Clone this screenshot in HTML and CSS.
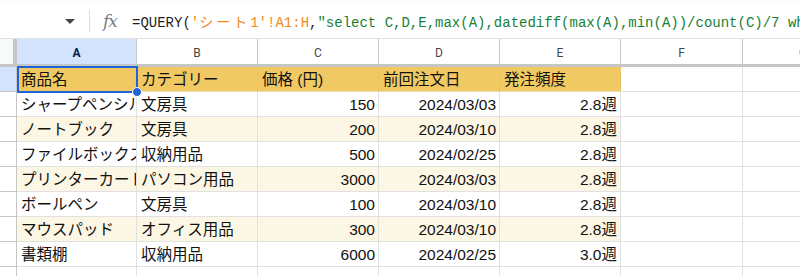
FILE: index.html
```html
<!DOCTYPE html>
<html lang="ja">
<head>
    <meta charset="UTF-8">
    <title>Sheet</title>
    <link rel="stylesheet" href="styles.css">
</head>
<body>

  <div class="formula-bar">
    <div class="name-box"><span class="caret"></span></div>
    <div class="divider"></div>
    <span class="fx">fx</span>
    <div class="formula">=QUERY(<span class="ref">'<span class="wide">シート</span>1'!A1:H</span>,<span class="str">"select C,D,E,max(A),datediff(max(A),min(A))/count(C)/7 where A is not null group by C,D,E"</span>)</div>
  </div>

  <div class="sheet">
    <div class="row heads">
      <div class="corner"></div>
      <div class="col-head active">A</div>
      <div class="col-head">B</div>
      <div class="col-head">C</div>
      <div class="col-head">D</div>
      <div class="col-head">E</div>
      <div class="col-head">F</div>
      <div class="col-head">G</div>
    </div>

    <div class="row title">
      <div class="rh active"></div>
      <div class="cell">商品名</div>
      <div class="cell">カテゴリー</div>
      <div class="cell">価格 (円)</div>
      <div class="cell">前回注文日</div>
      <div class="cell">発注頻度</div>
      <div class="cell blank"></div>
      <div class="cell blank"></div>
    </div>

    <div class="row">
      <div class="rh"></div>
      <div class="cell">シャープペンシル</div>
      <div class="cell">文房具</div>
      <div class="cell num">150</div>
      <div class="cell num">2024/03/03</div>
      <div class="cell num">2.8週</div>
      <div class="cell blank"></div>
      <div class="cell blank"></div>
    </div>

    <div class="row band">
      <div class="rh"></div>
      <div class="cell">ノートブック</div>
      <div class="cell">文房具</div>
      <div class="cell num">200</div>
      <div class="cell num">2024/03/10</div>
      <div class="cell num">2.8週</div>
      <div class="cell blank"></div>
      <div class="cell blank"></div>
    </div>

    <div class="row">
      <div class="rh"></div>
      <div class="cell">ファイルボックス</div>
      <div class="cell">収納用品</div>
      <div class="cell num">500</div>
      <div class="cell num">2024/02/25</div>
      <div class="cell num">2.8週</div>
      <div class="cell blank"></div>
      <div class="cell blank"></div>
    </div>

    <div class="row band">
      <div class="rh"></div>
      <div class="cell">プリンターカートリッジ</div>
      <div class="cell">パソコン用品</div>
      <div class="cell num">3000</div>
      <div class="cell num">2024/03/03</div>
      <div class="cell num">2.8週</div>
      <div class="cell blank"></div>
      <div class="cell blank"></div>
    </div>

    <div class="row">
      <div class="rh"></div>
      <div class="cell">ボールペン</div>
      <div class="cell">文房具</div>
      <div class="cell num">100</div>
      <div class="cell num">2024/03/10</div>
      <div class="cell num">2.8週</div>
      <div class="cell blank"></div>
      <div class="cell blank"></div>
    </div>

    <div class="row band">
      <div class="rh"></div>
      <div class="cell">マウスパッド</div>
      <div class="cell">オフィス用品</div>
      <div class="cell num">300</div>
      <div class="cell num">2024/03/10</div>
      <div class="cell num">2.8週</div>
      <div class="cell blank"></div>
      <div class="cell blank"></div>
    </div>

    <div class="row">
      <div class="rh"></div>
      <div class="cell">書類棚</div>
      <div class="cell">収納用品</div>
      <div class="cell num">6000</div>
      <div class="cell num">2024/02/25</div>
      <div class="cell num">3.0週</div>
      <div class="cell blank"></div>
      <div class="cell blank"></div>
    </div>

    <div class="row">
      <div class="rh"></div>
      <div class="cell blank"></div>
      <div class="cell blank"></div>
      <div class="cell blank"></div>
      <div class="cell blank"></div>
      <div class="cell blank"></div>
      <div class="cell blank"></div>
      <div class="cell blank"></div>
    </div>

    <!-- active cell A1 -->
    <div class="selection"><span class="handle"></span></div>
  </div>

</body>
</html>
```

FILE: styles.css
```css
body {
    margin: 0;
    width: 800px;
    height: 276px;
    overflow: hidden;
    background-color: #fff;
    font-family: "Liberation Sans", "Noto Sans CJK JP", sans-serif;
    color: #1f1f1f;
}

/* formula bar */

.formula-bar {
    display: flex;
    align-items: center;
    box-sizing: border-box;
    height: 39px;
    border-top: 4px solid #f9fbfd;
    border-bottom: 1px solid #e1e3e1;
    white-space: nowrap;
    overflow: hidden;
}

.name-box {
    display: flex;
    justify-content: flex-end;
    width: 75px;
    flex-shrink: 0;
}

.caret {
    width: 0;
    height: 0;
    border-left: 5px solid transparent;
    border-right: 5px solid transparent;
    border-top: 5px solid #444746;
}

.divider {
    width: 1px;
    height: 22px;
    margin-left: 14px;
    background-color: #dadce0;
    flex-shrink: 0;
}

.fx {
    width: 18px;
    margin-left: 13px;
    font-family: "DejaVu Serif", serif;
    font-style: italic;
    font-size: 17px;
    color: #7a7d80;
    letter-spacing: -1px;
    flex-shrink: 0;
}

.formula {
    margin-left: 11px;
    font-family: "Liberation Mono", "Noto Sans CJK JP", monospace;
    font-size: 14px;
    color: #1f1f1f;
}

.ref {
    color: #ee8a1d;
}

.wide {
    letter-spacing: 3px;
}

.str {
    color: #188038;
}

/* grid */

.sheet {
    position: relative;
}

.row {
    display: grid;
    grid-template-columns: 17px 120px 121px 121px 121px 121px 122px 121px;
    height: 25px;
}

.heads {
    height: 28px;
}

.corner {
    box-sizing: border-box;
    background-color: #f8f9fa;
    border-right: 4px solid #c4c7c5;
    border-bottom: 3px solid #c4c7c5;
}

.col-head {
    box-sizing: border-box;
    display: flex;
    align-items: center;
    justify-content: center;
    border-right: 1px solid #c4c7c5;
    border-bottom: 3px solid #c4c7c5;
    font-family: Roboto, "Liberation Sans", sans-serif;
    font-size: 12px;
    color: #444746;
    padding-top: 2px;
}

.col-head.active {
    background-color: #d3e3fd;
    color: #041e49;
    font-weight: bold;
}

.rh {
    box-sizing: border-box;
    border-right: 1px solid #c4c7c5;
    border-bottom: 1px solid #c4c7c5;
    background-color: #fff;
}

.rh.active {
    background-color: #d3e3fd;
}

.cell {
    box-sizing: border-box;
    border-right: 1px solid #e1e1e1;
    border-bottom: 1px solid #e1e1e1;
    padding: 1px 3px 0 4px;
    font-size: 15.5px;
    line-height: 23px;
    white-space: nowrap;
    overflow: hidden;
    color: #111;
}

.num {
    text-align: right;
}

.title .cell {
    background-color: #f1c963;
    border-right-color: #ecc35d;
    border-bottom-color: #e9dcc0;
}

.band .cell {
    background-color: #fcf6e4;
}

.row .cell.blank {
    background-color: #fff;
    border-right-color: #e1e1e1;
    border-bottom-color: #e1e1e1;
}

/* active cell outline + fill handle */

.selection {
    position: absolute;
    left: 17px;
    top: 27px;
    width: 121px;
    height: 27px;
    box-sizing: border-box;
    border: 2px solid #1f63d8;
}

.handle {
    position: absolute;
    right: -6px;
    bottom: -6px;
    width: 8px;
    height: 8px;
    border-radius: 50%;
    background-color: #1f63d8;
    border: 1px solid #fff;
}
```
